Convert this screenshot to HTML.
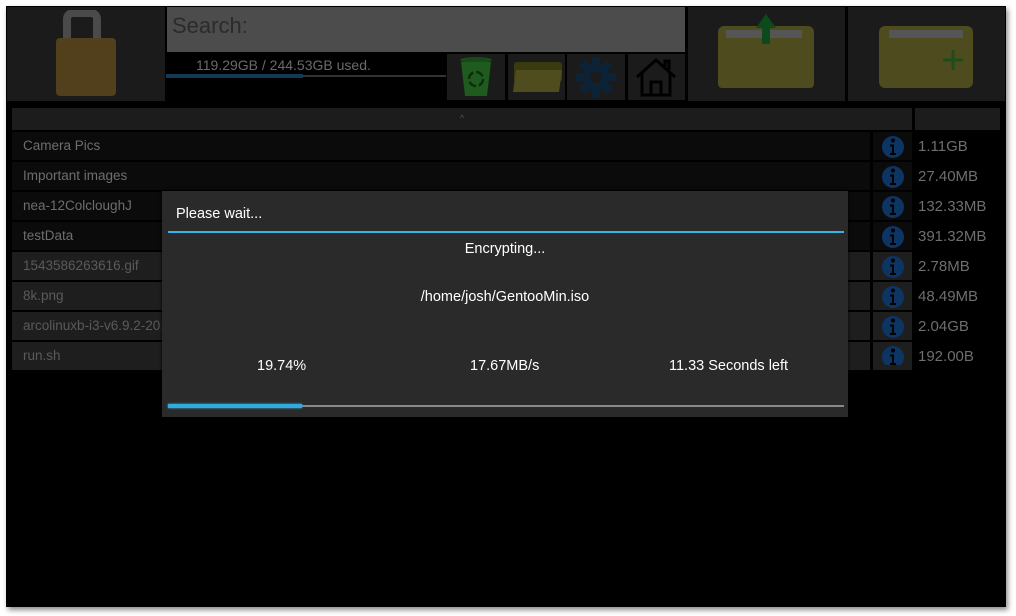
<!DOCTYPE html>
<html><head><meta charset="utf-8"><style>
*{margin:0;padding:0;box-sizing:border-box}
body{width:1016px;height:616px;background:#fff;position:relative;overflow:hidden;font-family:"Liberation Sans",sans-serif}
.win{position:absolute;left:6px;top:6px;width:1000px;height:601px;background:#000;box-shadow:2px 3px 5px rgba(0,0,0,.45)}
.a{position:absolute}
.tile{background:#1b1b1b}
.row{position:absolute;left:12px;width:858px;height:28px;font-size:13.5px;color:#6e6e6e;padding:6px 0 0 11px;white-space:nowrap;overflow:hidden}
.info{position:absolute;left:873px;width:39px;height:28px}
.size{position:absolute;left:918px;font-size:15px;color:#6e6e6e}
.dk{background:#0b0b0b}.lt{background:#1e1e1e}
.lt2{color:#5a5a5a}
.dt{font-size:14.5px;color:#fff}
</style></head><body>
<div class="win"></div>
<div class="a tile" style="left:7px;top:7px;width:158px;height:94px"></div>
<svg class="a" style="left:55px;top:10px" width="62" height="88"><rect x="12" y="3" width="30" height="40" rx="6" fill="none" stroke="#4a4a4a" stroke-width="8"/><rect x="1" y="28" width="60" height="58" rx="4" fill="#52401d"/></svg>
<div class="a" style="left:167px;top:7px;width:518px;height:45px;background:#4c4c4c;color:#2b2b2b;font-size:22px;padding:6px 0 0 5px">Search:</div>
<div class="a" style="left:196px;top:57px;font-size:14px;color:#6a6a6a">119.29GB / 244.53GB used.</div>
<div class="a" style="left:166px;top:75px;width:280px;height:2px;background:#333"></div>
<div class="a" style="left:166px;top:74px;width:137px;height:4px;background:#133a52"></div>
<div class="a tile" style="left:447px;top:54px;width:58px;height:46px"></div>
<svg class="a" style="left:458px;top:56px" width="36" height="42"><ellipse cx="18" cy="4" rx="16" ry="3" fill="#1a4a1a"/><path d="M3 6 L33 6 L29 40 L7 40Z" fill="#1f5a1f"/><circle cx="18" cy="23" r="7" fill="none" stroke="#0d2d0d" stroke-width="2.5" stroke-dasharray="8 3"/></svg>
<div class="a tile" style="left:508px;top:54px;width:57px;height:46px"></div>
<svg class="a" style="left:512px;top:62px" width="52" height="32"><rect x="2" y="0" width="48" height="20" rx="3" fill="#3a3a10"/><path d="M4 8 L50 8 L47 30 L1 30Z" fill="#4f4d1e"/></svg>
<div class="a tile" style="left:567px;top:54px;width:58px;height:46px"></div>
<svg class="a" style="left:575px;top:57px" width="42" height="40" viewBox="0 0 42 40"><g fill="#0c2237" transform="translate(21 20)"><circle r="13"/><rect x="-4" y="-20" width="8" height="40"/><rect x="-20" y="-4" width="40" height="8"/><rect x="-4" y="-20" width="8" height="40" transform="rotate(45)"/><rect x="-4" y="-20" width="8" height="40" transform="rotate(-45)"/><circle r="6" fill="#1b1b1b"/></g></svg>
<div class="a tile" style="left:628px;top:54px;width:57px;height:46px"></div>
<svg class="a" style="left:634px;top:57px" width="44" height="40"><path d="M3 20 L22 3 L41 20 M8 16 V38 H36 V16 M17 38 V25 H27 V38 M31 10 V4 H35 V13" fill="none" stroke="#000" stroke-width="3"/></svg>
<div class="a tile" style="left:688px;top:7px;width:157px;height:94px"></div>
<svg class="a" style="left:716px;top:14px" width="100" height="76"><rect x="2" y="12" width="96" height="62" rx="6" fill="#4e4b1f"/><rect x="10" y="16" width="76" height="8" fill="#555"/><rect x="2" y="24" width="96" height="50" rx="4" fill="#4e4b1f"/><path d="M50 0 L60 14 H54 V30 H46 V14 H40Z" fill="#0c4a1c"/></svg>
<div class="a tile" style="left:848px;top:7px;width:157px;height:94px"></div>
<svg class="a" style="left:877px;top:24px" width="100" height="66"><rect x="2" y="2" width="94" height="62" rx="6" fill="#4e4b1f"/><rect x="12" y="6" width="74" height="8" fill="#555"/><path d="M76 26 V46 M66 36 H86" stroke="#1d4d1d" stroke-width="3"/></svg>
<div class="a" style="left:12px;top:108px;width:900px;height:22px;background:#1c1c1c;color:#555;font-size:9px;text-align:center;padding-top:5px">^</div>
<div class="a" style="left:915px;top:108px;width:85px;height:22px;background:#1c1c1c"></div>
<div class="row dk" style="top:132px">Camera Pics</div>
<div class="row dk" style="top:162px">Important images</div>
<div class="row dk" style="top:192px">nea-12ColcloughJ</div>
<div class="row dk" style="top:222px">testData</div>
<div class="row lt lt2" style="top:252px">1543586263616.gif</div>
<div class="row lt lt2" style="top:282px">8k.png</div>
<div class="row lt lt2" style="top:312px">arcolinuxb-i3-v6.9.2-2019</div>
<div class="row lt lt2" style="top:342px">run.sh</div>
<div class="info dk" style="top:132px"></div><div class="info dk" style="top:162px"></div><div class="info dk" style="top:192px"></div><div class="info dk" style="top:222px"></div>
<div class="info lt" style="top:252px"></div><div class="info lt" style="top:282px"></div><div class="info lt" style="top:312px"></div><div class="info lt" style="top:342px"></div>
<svg class="a" style="left:881px;top:135px" width="24" height="230">
<defs><g id="i"><circle cx="12" cy="12" r="11" fill="#0d3563"/><circle cx="12" cy="5.5" r="2" fill="#000"/><path d="M9 9.5 H13 V18 H15 V20 H9 V18 H11 V11.5 H9Z" fill="#000"/></g></defs>
<use href="#i" y="0"/><use href="#i" y="30"/><use href="#i" y="60"/><use href="#i" y="90"/><use href="#i" y="120"/><use href="#i" y="150"/><use href="#i" y="180"/><use href="#i" y="210"/></svg>
<div class="size" style="top:138px">1.11GB</div>
<div class="size" style="top:168px">27.40MB</div>
<div class="size" style="top:198px">132.33MB</div>
<div class="size" style="top:228px">391.32MB</div>
<div class="size" style="top:258px">2.78MB</div>
<div class="size" style="top:288px">48.49MB</div>
<div class="size" style="top:318px">2.04GB</div>
<div class="size" style="top:348px">192.00B</div>
<div class="a" style="left:162px;top:191px;width:686px;height:226px;background:#2a2a2a;box-shadow:0 0 3px #000"></div>
<div class="a dt" style="left:176px;top:206px">Please wait...</div>
<div class="a" style="left:168px;top:231px;width:676px;height:2px;background:#33b5e5"></div>
<div class="a dt" style="left:162px;top:241px;width:686px;text-align:center">Encrypting...</div>
<div class="a dt" style="left:162px;top:289px;width:686px;text-align:center">/home/josh/GentooMin.iso</div>
<div class="a dt" style="left:257px;top:358px">19.74%</div>
<div class="a dt" style="left:470px;top:358px">17.67MB/s</div>
<div class="a dt" style="left:669px;top:358px">11.33 Seconds left</div>
<div class="a" style="left:168px;top:405px;width:676px;height:2px;background:#888"></div>
<div class="a" style="left:168px;top:404px;width:134px;height:4px;background:#33aadd;box-shadow:0 0 2px #33b5e5"></div>
</body></html>
